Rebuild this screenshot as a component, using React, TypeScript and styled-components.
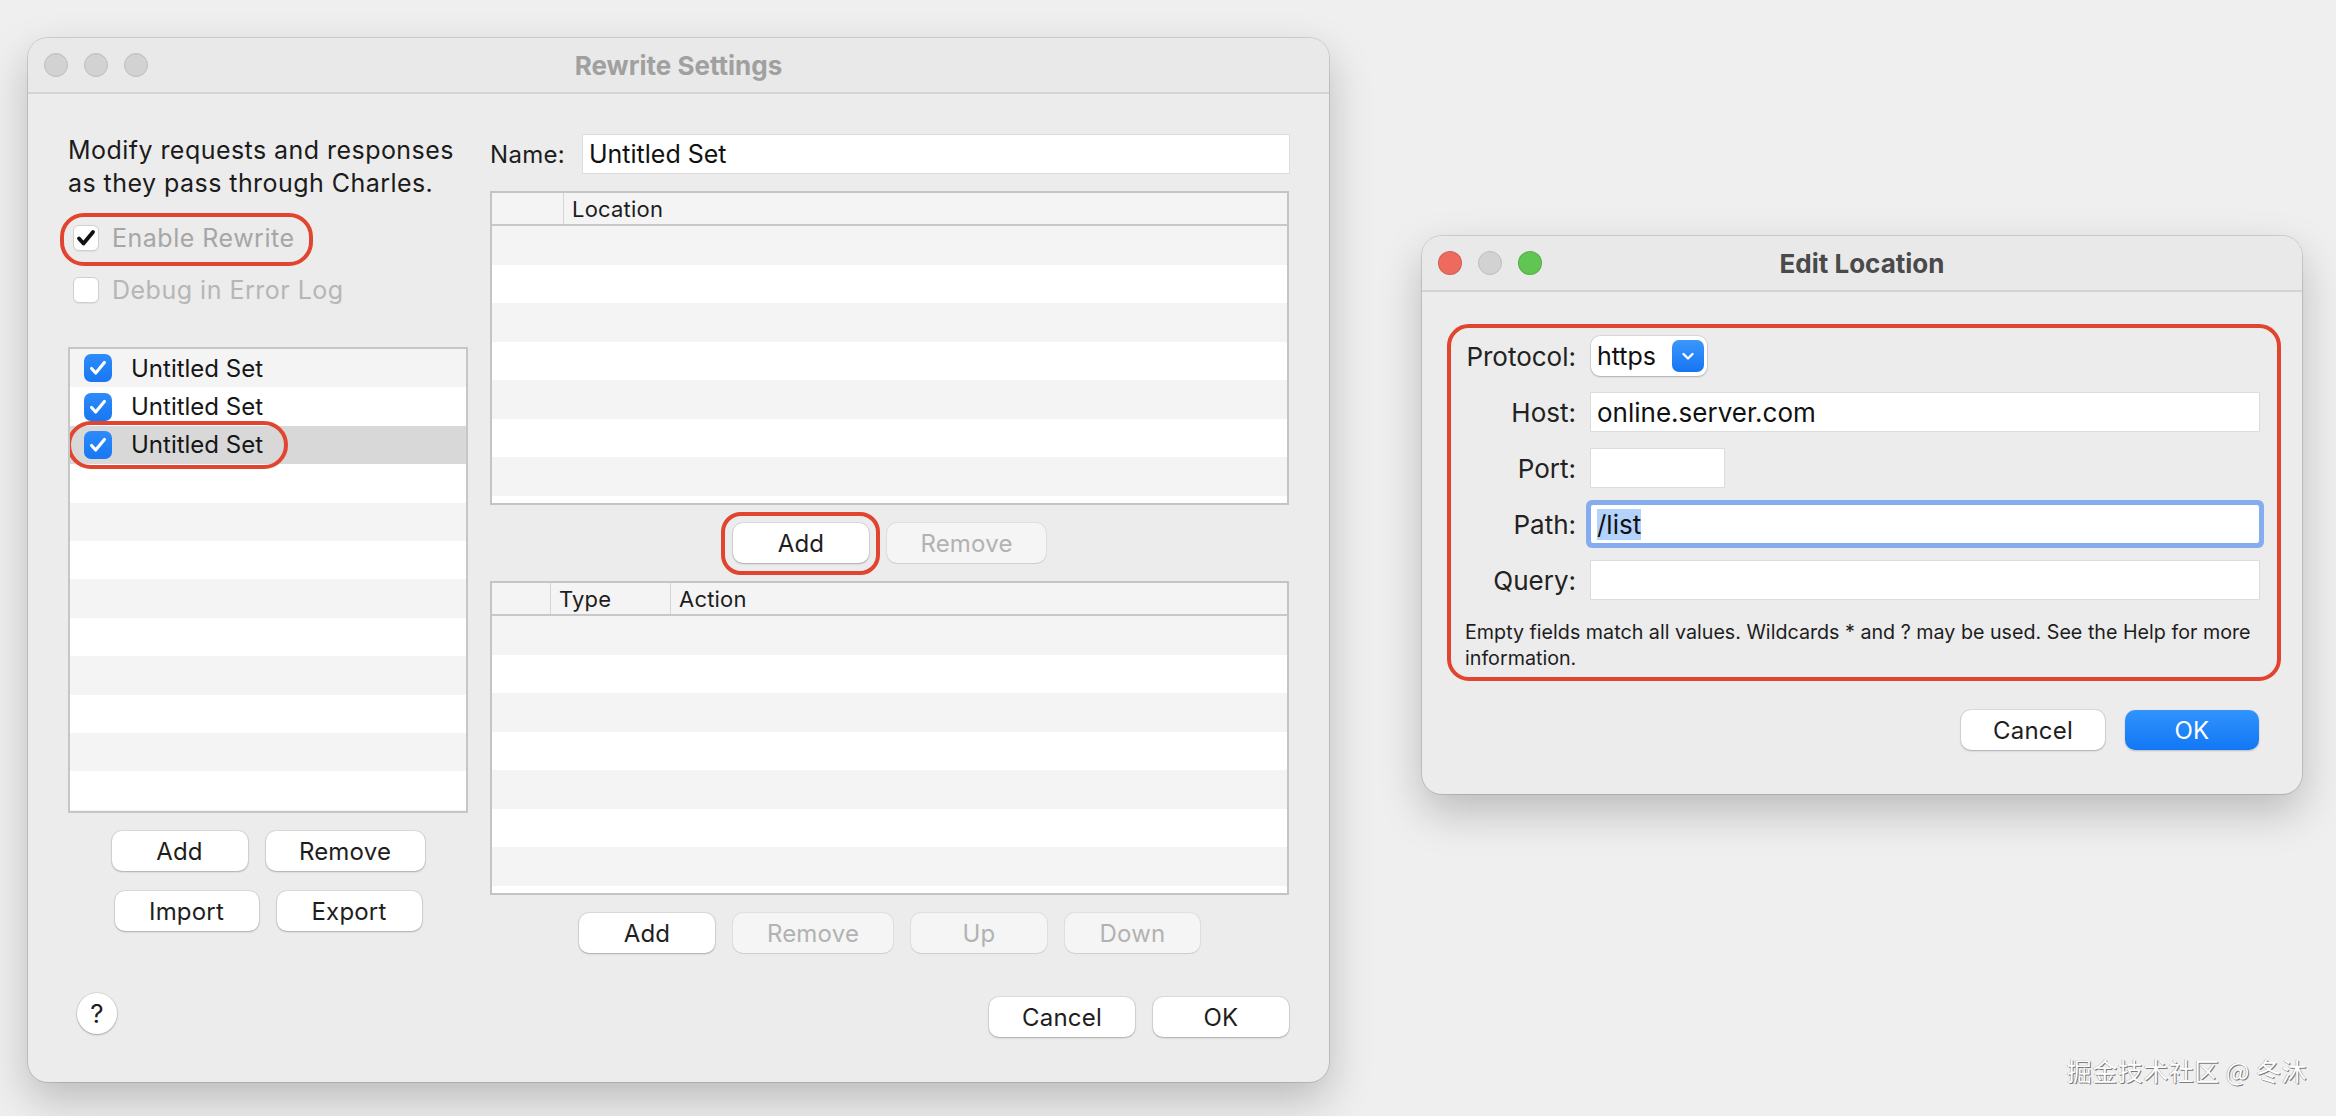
import React from "react";
import styled, { createGlobalStyle, css } from "styled-components";

const GlobalStyle = createGlobalStyle`
  html, body {
    margin: 0;
    padding: 0;
  }
  body {
    background: #efefef;
    font-family: Inter, "Noto Sans", "Liberation Sans", sans-serif;
    color: #1d1d1d;
  }
`;

const RED = "#e2452f";

const Desktop = styled.div`
  position: relative;
  width: 2336px;
  height: 1116px;
  overflow: hidden;
  background: #efefef;
`;

// windows sit on a free desktop, so they are placed by coordinates
const Window = styled.div<{ $left: number; $top: number; $width: number; $height: number }>`
  position: absolute;
  left: ${(p) => p.$left}px;
  top: ${(p) => p.$top}px;
  width: ${(p) => p.$width}px;
  height: ${(p) => p.$height}px;
  display: flex;
  flex-direction: column;
  background: #ececec;
  border-radius: 20px;
  overflow: hidden;
  box-shadow: 0 0 0 1px rgba(0, 0, 0, 0.12), 0 18px 44px rgba(0, 0, 0, 0.22);
`;

const TitleBar = styled.div`
  flex: none;
  height: 54px;
  display: grid;
  grid-template-columns: 1fr auto 1fr;
  align-items: center;
  padding: 0 16px;
  background: #e9e9e9;
  border-bottom: 2px solid #d4d4d4;
`;

const Lights = styled.div`
  display: flex;
  gap: 16px;
`;

const Light = styled.span<{ $color?: string }>`
  width: 24px;
  height: 24px;
  border-radius: 50%;
  box-sizing: border-box;
  background: ${(p) => p.$color || "#d2d2d2"};
  border: 1px solid ${(p) => (p.$color ? "rgba(0,0,0,0.12)" : "#bdbdbd")};
`;

const Title = styled.div<{ $active?: boolean }>`
  font-size: 26px;
  font-weight: 700;
  color: ${(p) => (p.$active ? "#4a4a4a" : "#a0a0a0")};
`;

/* ---------- shared controls ---------- */

const Button = styled.button<{ $w: number; $disabled?: boolean; $primary?: boolean }>`
  width: ${(p) => p.$w}px;
  height: 40px;
  border: none;
  border-radius: 10px;
  font-family: inherit;
  font-size: 24px;
  letter-spacing: 0.2px;
  padding: 0;
  background: #ffffff;
  color: #1e1e1e;
  box-shadow: 0 0 0 1px rgba(0, 0, 0, 0.07), 0 1px 2px rgba(0, 0, 0, 0.22);
  ${(p) =>
    p.$disabled &&
    css`
      background: #f5f5f5;
      color: #b2b2b2;
      box-shadow: 0 0 0 1px rgba(0, 0, 0, 0.05), 0 1px 1px rgba(0, 0, 0, 0.08);
    `}
  ${(p) =>
    p.$primary &&
    css`
      background: linear-gradient(180deg, #3193fd 0%, #1177f5 100%);
      color: #ffffff;
      box-shadow: 0 1px 2px rgba(0, 0, 0, 0.2);
    `}
`;

const ButtonRow = styled.div<{ $mt?: number; $justify?: string; $gap?: number; $pr?: number }>`
  display: flex;
  justify-content: ${(p) => p.$justify || "center"};
  gap: ${(p) => p.$gap ?? 18}px;
  margin-top: ${(p) => (p.$mt === undefined ? "auto" : `${p.$mt}px`)};
  padding-right: ${(p) => p.$pr ?? 0}px;
`;

const Marked = styled.span<{ $t: number; $r: number; $b: number; $l: number; $radius: number }>`
  position: relative;
  display: inline-flex;
  align-items: center;
  &::after {
    content: "";
    position: absolute;
    top: -${(p) => p.$t}px;
    right: -${(p) => p.$r}px;
    bottom: -${(p) => p.$b}px;
    left: -${(p) => p.$l}px;
    border: 4px solid ${RED};
    border-radius: ${(p) => p.$radius}px;
    pointer-events: none;
  }
`;

const TextInput = styled.div<{ $w?: number }>`
  box-sizing: border-box;
  width: ${(p) => (p.$w ? `${p.$w}px` : "100%")};
  height: 38px;
  display: flex;
  align-items: center;
  padding: 0 6px;
  background: #ffffff;
  box-shadow: 0 0 0 1px #dcdcdc, 0 1px 0 #c4c4c4;
`;

/* ---------- rewrite settings ---------- */

const RewriteBody = styled.div`
  flex: 1;
  display: grid;
  grid-template-columns: 400px 1fr;
  column-gap: 22px;
  padding: 40px 40px 45px 40px;
`;

const Column = styled.div`
  display: flex;
  flex-direction: column;
  min-width: 0;
`;

const Description = styled.p`
  margin: 0;
  font-size: 25px;
  line-height: 33px;
  color: #1b1b1b;
  letter-spacing: 0.45px;
  white-space: nowrap;
`;

const CheckRow = styled.div<{ $mt: number }>`
  display: flex;
  align-items: center;
  height: 36px;
  margin-top: ${(p) => p.$mt}px;
  padding-left: 5px;
`;

const CheckLabel = styled.span<{ $muted?: boolean }>`
  display: inline-flex;
  align-items: center;
  gap: 13px;
  height: 36px;
  font-size: 25px;
  color: ${(p) => (p.$muted ? "#b6b6b6" : "#a6a6a6")};
  letter-spacing: 0.5px;
`;

const PlainBox = styled.span`
  width: 26px;
  height: 26px;
  box-sizing: border-box;
  border-radius: 6px;
  background: #ffffff;
  border: 1px solid #cfcfcf;
  display: flex;
  align-items: center;
  justify-content: center;
  box-shadow: 0 1px 1px rgba(0, 0, 0, 0.06);
`;

const BlueBox = styled.span`
  width: 28px;
  height: 28px;
  border-radius: 7px;
  background: linear-gradient(180deg, #2d8bfb 0%, #1877f2 100%);
  display: flex;
  align-items: center;
  justify-content: center;
`;

const SetList = styled.div`
  margin-top: 39px;
  height: 466px;
  box-sizing: border-box;
  border: 2px solid #c6c6c6;
  background: #ffffff;
  overflow: hidden;
`;

const Stripe = styled.div<{ $odd: boolean; $selected?: boolean }>`
  height: 38.4px;
  display: flex;
  align-items: center;
  padding-left: 14px;
  background: ${(p) => (p.$selected ? "#d8d8d8" : p.$odd ? "#f4f4f4" : "#ffffff")};
`;

const SetItem = styled.span`
  display: inline-flex;
  align-items: center;
  gap: 19px;
  height: 38px;
  font-size: 24px;
  color: #161616;
`;

const HelpButton = styled.button`
  margin-top: auto;
  margin-left: 9px;
  margin-bottom: 3px;
  width: 40px;
  height: 41px;
  border: none;
  border-radius: 50%;
  background: #ffffff;
  font-family: inherit;
  font-size: 26px;
  color: #1e1e1e;
  padding: 0;
  box-shadow: 0 0 0 1px rgba(0, 0, 0, 0.07), 0 1px 2px rgba(0, 0, 0, 0.25);
`;

const NameRow = styled.div`
  display: flex;
  align-items: center;
  height: 40px;
`;

const FieldLabel = styled.span<{ $w?: number }>`
  flex: none;
  width: ${(p) => (p.$w ? `${p.$w}px` : "auto")};
  font-size: 24px;
  letter-spacing: 0.3px;
  color: #1d1d1d;
`;

const InputText = styled.span<{ $size?: number }>`
  font-size: ${(p) => p.$size || 24}px;
  color: #111;
  white-space: nowrap;
`;

const Table = styled.div<{ $mt: number }>`
  margin-top: ${(p) => p.$mt}px;
  height: 314px;
  box-sizing: border-box;
  border: 2px solid #c4c4c4;
  background: #ffffff;
  display: flex;
  flex-direction: column;
  overflow: hidden;
`;

const TableHead = styled.div`
  flex: none;
  height: 31px;
  display: flex;
  background: #f4f4f4;
  border-bottom: 2px solid #c8c8c8;
`;

const HeadCell = styled.div<{ $w?: number; $first?: boolean }>`
  box-sizing: border-box;
  ${(p) => (p.$w ? `width: ${p.$w}px; flex: none;` : "flex: 1;")}
  display: flex;
  align-items: center;
  padding-left: 8px;
  font-size: 22px;
  letter-spacing: 0.2px;
  color: #1d1d1d;
  border-left: ${(p) => (p.$first ? "none" : "1px solid #d6d6d6")};
`;

const TableRow = styled.div<{ $odd: boolean }>`
  flex: none;
  height: 38.5px;
  background: ${(p) => (p.$odd ? "#f4f4f4" : "#ffffff")};
`;

/* ---------- edit location ---------- */

const EditBody = styled.div`
  flex: 1;
  display: flex;
  flex-direction: column;
  padding: 32px 21px 0 25px;
`;

const Fieldset = styled.div`
  border: 4px solid ${RED};
  border-radius: 22px;
  padding: 9px 18px 6px 12px;
`;

const FormGrid = styled.div`
  display: grid;
  grid-template-columns: 113px 1fr;
  column-gap: 15px;
  row-gap: 18px;
  grid-auto-rows: 38px;
  align-items: center;
`;

const RightLabel = styled.span`
  text-align: right;
  font-size: 26px;
  color: #222;
  white-space: nowrap;
`;

const Select = styled.div`
  box-sizing: border-box;
  width: 116px;
  height: 40px;
  display: flex;
  align-items: center;
  justify-content: space-between;
  padding: 0 3px 0 6px;
  background: #ffffff;
  border-radius: 9px;
  box-shadow: 0 0 0 1px rgba(0, 0, 0, 0.08), 0 1px 2px rgba(0, 0, 0, 0.2);
`;

const SelectArrow = styled.span`
  width: 32px;
  height: 32px;
  border-radius: 7px;
  background: linear-gradient(180deg, #3a97fc 0%, #1774f2 100%);
  display: flex;
  align-items: center;
  justify-content: center;
`;

const FocusInput = styled(TextInput)`
  border-radius: 2px;
  box-shadow: 0 0 0 5px #84acee;
`;

const Selection = styled.span`
  background: #b3d3fd;
`;

const HelpText = styled.p`
  margin: 20px 0 0;
  padding-left: 2px;
  font-size: 19.7px;
  line-height: 26px;
  color: #1d1d1d;
  white-space: nowrap;
`;

const Watermark = styled.div`
  position: absolute;
  right: 29px;
  bottom: 28px;
  font-family: "Noto Sans CJK SC", "Noto Sans", sans-serif;
  font-size: 25px;
  color: #ffffff;
  letter-spacing: 0.5px;
  text-shadow: 1px 1px 0 #7a7a7a, -0.5px -0.5px 0 #9a9a9a;
`;

/* ---------- icons ---------- */

const Tick = ({ color, size, weight = 3.4 }: { color: string; size: number; weight?: number }) => (
  <svg width={size} height={size} viewBox="0 0 24 24">
    <path d="M5 12.5l4.5 5L19 6" fill="none" stroke={color} strokeWidth={weight} strokeLinecap="round" strokeLinejoin="round" />
  </svg>
);

const Chevron = () => (
  <svg width={18} height={18} viewBox="0 0 18 18">
    <path d="M4.5 7l4.5 4.5L13.5 7" fill="none" stroke="#fff" strokeWidth={2.4} strokeLinecap="round" strokeLinejoin="round" />
  </svg>
);

const TableRows = ({ count }: { count: number }) => (
  <>
    {Array.from({ length: count }, (_, i) => (
      <TableRow key={i} $odd={i % 2 === 0} />
    ))}
  </>
);

const sets = ["Untitled Set", "Untitled Set", "Untitled Set"];

const App: React.FC = () => {
  return (
    <Desktop>
      <GlobalStyle />

      <Window $left={28} $top={38} $width={1301} $height={1044}>
        <TitleBar>
          <Lights>
            <Light />
            <Light />
            <Light />
          </Lights>
          <Title>Rewrite Settings</Title>
          <span />
        </TitleBar>
        <RewriteBody>
          <Column>
            <Description>
              Modify requests and responses
              <br />
              as they pass through Charles.
            </Description>
            <CheckRow $mt={20}>
              <Marked $t={7} $r={19} $b={10} $l={13} $radius={24}>
                <CheckLabel>
                  <PlainBox>
                    <Tick color="#111" size={24} weight={3.8} />
                  </PlainBox>
                  Enable Rewrite
                </CheckLabel>
              </Marked>
            </CheckRow>
            <CheckRow $mt={16}>
              <CheckLabel $muted>
                <PlainBox />
                Debug in Error Log
              </CheckLabel>
            </CheckRow>
            <SetList>
              {Array.from({ length: 13 }, (_, i) => {
                const name = sets[i];
                const item = name ? (
                  <SetItem>
                    <BlueBox>
                      <Tick color="#fff" size={22} />
                    </BlueBox>
                    {name}
                  </SetItem>
                ) : null;
                return (
                  <Stripe key={i} $odd={i % 2 === 0} $selected={i === 2}>
                    {i === 2 ? (
                      <Marked $t={5} $r={25} $b={5} $l={17} $radius={24}>
                        {item}
                      </Marked>
                    ) : (
                      item
                    )}
                  </Stripe>
                );
              })}
            </SetList>
            <ButtonRow $mt={18}>
              <Button $w={136}>Add</Button>
              <Button $w={159}>Remove</Button>
            </ButtonRow>
            <ButtonRow $mt={20}>
              <Button $w={144}>Import</Button>
              <Button $w={145}>Export</Button>
            </ButtonRow>
            <HelpButton>?</HelpButton>
          </Column>

          <Column>
            <NameRow>
              <FieldLabel $w={93}>Name:</FieldLabel>
              <TextInput>
                <InputText $size={25}>Untitled Set</InputText>
              </TextInput>
            </NameRow>
            <Table $mt={17}>
              <TableHead>
                <HeadCell $w={71} $first />
                <HeadCell>Location</HeadCell>
              </TableHead>
              <TableRows count={8} />
            </Table>
            <ButtonRow $mt={18}>
              <Marked $t={11} $r={11} $b={12} $l={12} $radius={20}>
                <Button $w={136}>Add</Button>
              </Marked>
              <Button $w={159} $disabled>
                Remove
              </Button>
            </ButtonRow>
            <Table $mt={18}>
              <TableHead>
                <HeadCell $w={58} $first />
                <HeadCell $w={120}>Type</HeadCell>
                <HeadCell>Action</HeadCell>
              </TableHead>
              <TableRows count={8} />
            </Table>
            <ButtonRow $mt={18}>
              <Button $w={136}>Add</Button>
              <Button $w={160} $disabled>
                Remove
              </Button>
              <Button $w={136} $disabled>
                Up
              </Button>
              <Button $w={135} $disabled>
                Down
              </Button>
            </ButtonRow>
            <ButtonRow $justify="flex-end">
              <Button $w={146}>Cancel</Button>
              <Button $w={136}>OK</Button>
            </ButtonRow>
          </Column>
        </RewriteBody>
      </Window>

      <Window $left={1422} $top={236} $width={880} $height={558}>
        <TitleBar>
          <Lights>
            <Light $color="#ee6a5f" />
            <Light />
            <Light $color="#61c554" />
          </Lights>
          <Title $active>Edit Location</Title>
          <span />
        </TitleBar>
        <EditBody>
          <Fieldset>
            <FormGrid>
              <RightLabel>Protocol:</RightLabel>
              <Select>
                <InputText $size={25}>https</InputText>
                <SelectArrow>
                  <Chevron />
                </SelectArrow>
              </Select>
              <RightLabel>Host:</RightLabel>
              <TextInput>
                <InputText $size={26}>online.server.com</InputText>
              </TextInput>
              <RightLabel>Port:</RightLabel>
              <TextInput $w={133} />
              <RightLabel>Path:</RightLabel>
              <FocusInput>
                <InputText $size={26}>
                  <Selection>/list</Selection>
                </InputText>
              </FocusInput>
              <RightLabel>Query:</RightLabel>
              <TextInput />
            </FormGrid>
            <HelpText>
              Empty fields match all values. Wildcards * and ? may be used. See the Help for more
              <br />
              information.
            </HelpText>
          </Fieldset>
          <ButtonRow $mt={29} $justify="flex-end" $gap={20} $pr={22}>
            <Button $w={144}>Cancel</Button>
            <Button $w={134} $primary>
              OK
            </Button>
          </ButtonRow>
        </EditBody>
      </Window>

      <Watermark>掘金技术社区 @ 冬沐</Watermark>
    </Desktop>
  );
};

export default App;
